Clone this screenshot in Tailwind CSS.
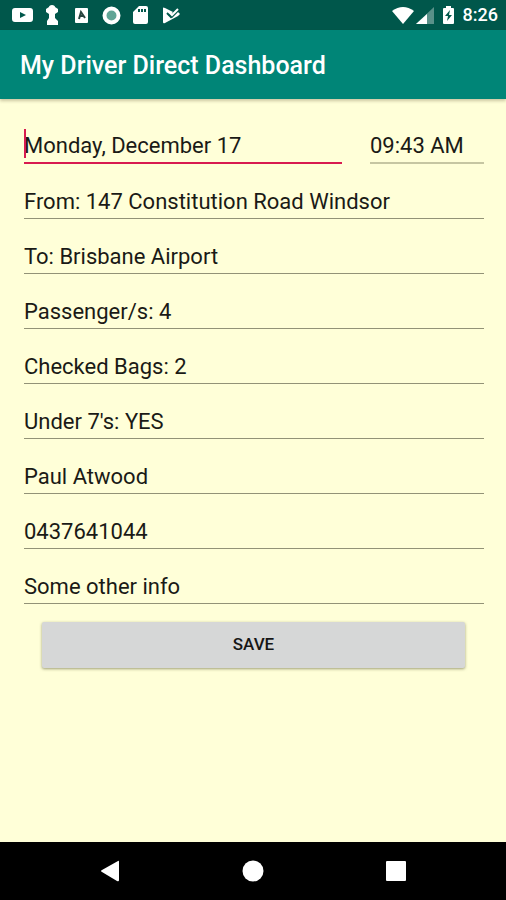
<!DOCTYPE html>
<html lang="en">
<head>
<meta charset="utf-8">
<meta name="viewport" content="width=device-width, initial-scale=1">
<title>My Driver Direct Dashboard</title>
<script src="https://cdn.jsdelivr.net/npm/@tailwindcss/browser@4"></script>
</head>
<body class="flex min-h-screen flex-col bg-[#ffffd8] font-[Roboto,sans-serif] text-[#1a1a16]">
<div class="flex h-[30px] items-center justify-between bg-[#00574b] pr-2 pl-3 text-white">
  <div class="flex items-center gap-[9px]">
    <svg class="size-[21px]" viewBox="0 0 21 21" fill="currentColor"><path fill-rule="evenodd" d="M3 3H18Q21 3 21 6V14Q21 17 18 17H3Q0 17 0 14V6Q0 3 3 3ZM8 7V13L14 10Z"/></svg>
    <svg class="size-[21px]" viewBox="0 0 21 21" fill="currentColor"><path d="M10 0C8 0 7 1 7 2L4 4V7L7 9V13L5 16V20H16V16L13 13V9L16 7V4L13 2C13 1 12 0 10 0Z"/></svg>
    <svg class="size-[21px]" viewBox="0 0 21 21" fill="currentColor"><path d="M4 3H15Q16 3 16 4V17Q16 18 15 18H4Q3 18 3 17V4Q3 3 4 3Z"/><path d="M7 14L9 7L13 13M8 11H11" fill="none" stroke="#28443f" stroke-width="2"/></svg>
    <svg class="size-[21px]" viewBox="0 0 21 21"><circle cx="9.5" cy="10.5" r="7" fill="#60a596" stroke="#fff" stroke-width="4"/></svg>
    <svg class="size-[21px]" viewBox="0 0 21 21" fill="currentColor"><path fill-rule="evenodd" d="M7 1H14Q16 1 16 3V17Q16 19 14 19H3Q1 19 1 17V7ZM6 4V7H8V4ZM9 4V7H11V4ZM12 4V7H14V4Z"/></svg>
    <svg class="size-[21px]" viewBox="0 0 21 21"><path d="M1 3Q1 2 3 3L11 7L9 9L7 8L6 10L10 13L16 7L18 9L16 11L3 18Q1 19 1 17Z" fill="#fff"/><path d="M5 8L9 12L17 4" fill="none" stroke="#00574b" stroke-width="2"/><path d="M7 7L10 10L16 4" fill="none" stroke="#fff" stroke-width="2"/></svg>
  </div>
  <div class="flex items-center">
    <svg class="h-[20px] w-[22px]" viewBox="0 0 22 20" fill="currentColor"><path d="M0 6Q11 -2 22 6L11 19Z"/></svg>
    <svg class="ml-[2px] h-[20px] w-[18px]" viewBox="0 0 18 20" fill="currentColor"><path d="M18 2V19H0Z" opacity=".35"/><path d="M11 9V19H0Z"/></svg>
    <svg class="ml-[8px] h-[20px] w-[13px]" viewBox="0 0 13 20" fill="currentColor"><path fill-rule="evenodd" d="M4 1H9V3H11Q12 3 12 4V18Q12 19 11 19H2Q1 19 1 18V4Q1 3 2 3H4ZM8 5L3 11H6L5 16L10 10H7Z"/></svg>
    <span class="ml-2 text-[18px] leading-5 font-medium">8:26</span>
  </div>
</div>
<header class="relative flex h-[69px] items-center bg-[#008577] px-5 pt-[3px] shadow-[0_2px_3px_rgba(90,70,40,0.3)]">
  <h1 class="text-[25px] leading-8 font-medium text-white">My Driver Direct Dashboard</h1>
</header>
<main class="flex-1 pt-7 pr-[22px] pl-6">
  <form class="flex flex-col gap-[18px] text-[22px]">
    <div class="flex gap-7">
      <div class="relative flex-1">
        <input aria-label="Date" value="Monday, December 17" class="block h-[37px] w-full border-b-2 border-[#d81b50] pt-[1px] outline-none">
        <span class="absolute top-[2px] left-0 h-[29px] w-[2px] bg-[#d81b50]"></span>
      </div>
      <input aria-label="Time" value="09:43 AM" class="block h-[37px] w-[114px] border-b-2 border-[#c6c6a2] pt-[1px] outline-none">
    </div>
    <input aria-label="From" value="From: 147 Constitution Road Windsor" class="block h-[37px] w-full border-b border-[#929277] pt-[2px] outline-none">
    <input aria-label="To" value="To: Brisbane Airport" class="block h-[37px] w-full border-b border-[#929277] pt-[2px] outline-none">
    <input aria-label="Passengers" value="Passenger/s: 4" class="block h-[37px] w-full border-b border-[#929277] pt-[2px] outline-none">
    <input aria-label="Checked bags" value="Checked Bags: 2" class="block h-[37px] w-full border-b border-[#929277] pt-[2px] outline-none">
    <input aria-label="Under 7's" value="Under 7's: YES" class="block h-[37px] w-full border-b border-[#929277] pt-[2px] outline-none">
    <input aria-label="Name" value="Paul Atwood" class="block h-[37px] w-full border-b border-[#929277] pt-[2px] outline-none">
    <input aria-label="Phone" value="0437641044" class="block h-[37px] w-full border-b border-[#929277] pt-[2px] outline-none">
    <input aria-label="Other info" value="Some other info" class="block h-[37px] w-full border-b border-[#929277] pt-[2px] outline-none">
    <button type="button" class="mr-[19px] ml-[18px] h-[46px] rounded-[2px] bg-[#d6d7d7] text-[17px] font-medium text-[#161616] shadow-[0_1px_3px_rgba(60,60,20,0.5)]">SAVE</button>
  </form>
</main>
<nav class="flex h-[58px] items-center justify-center gap-[121px] bg-black text-white">
  <button type="button" aria-label="Back"><svg class="size-[22px]" viewBox="0 0 22 22" fill="currentColor"><path d="M19 1Q20 0 20 2V20Q20 22 18 21L3 12Q1 11 3 10Z"/></svg></button>
  <button type="button" aria-label="Home"><svg class="size-[22px]" viewBox="0 0 22 22" fill="currentColor"><circle cx="11" cy="11" r="10.5"/></svg></button>
  <button type="button" aria-label="Recent apps"><svg class="size-[22px]" viewBox="0 0 22 22" fill="currentColor"><rect x="1" y="1" width="20" height="20" rx="1"/></svg></button>
</nav>
</body>
</html>
